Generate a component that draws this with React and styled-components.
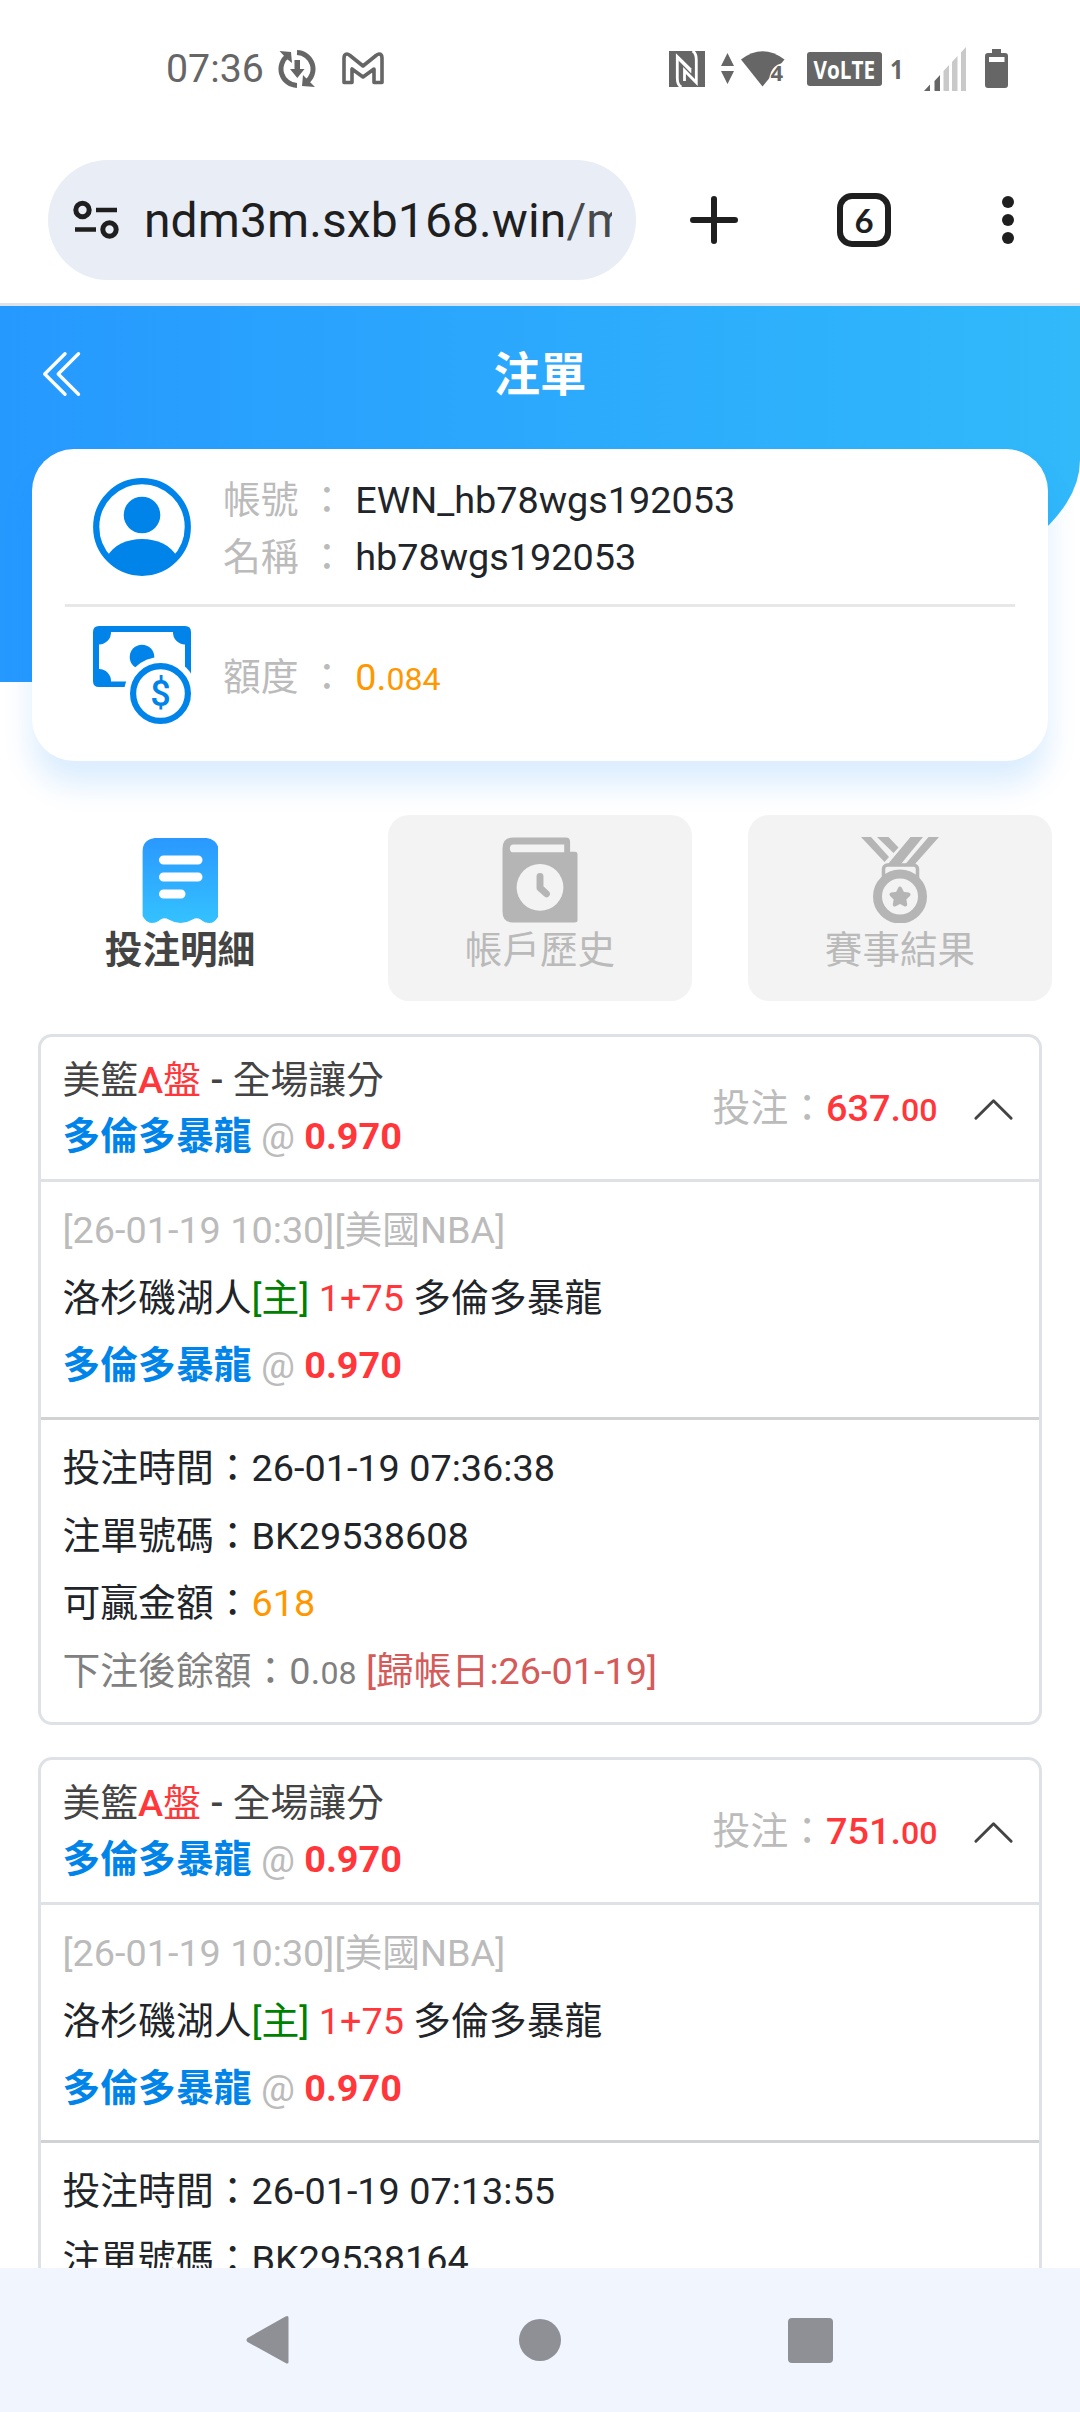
import styled, { createGlobalStyle } from "styled-components";
import { BsChevronDoubleLeft, BsChevronUp } from "react-icons/bs";

const GlobalStyle = createGlobalStyle`
* {
  box-sizing: border-box;
}
body {
  margin: 0;
  background: #fff;
  overflow: hidden;
}
svg {
  display: block;
  flex: none;
}
`;

const Screen = styled.div`
width: 1080px;
height: 2412px;
display: flex;
flex-direction: column;
overflow: hidden;
background: #fff;
color: #212529;
font-family: Roboto, "Noto Sans CJK TC", sans-serif;
font-size: 37.8px;
line-height: 1.5;
`;

/* status bar */

const StatusBar = styled.div`
flex: none;
height: 137px;
padding: 0 72px 0 166px;
display: flex;
justify-content: space-between;
align-items: center;
color: #666;
`;

const StatusGroup = styled.div`
display: flex;
align-items: center;
`;

const Clock = styled.span`
font-size: 39.3px;
line-height: 46px;
margin-right: 14px;
padding-top: 1px;
`;

const Slot = styled.span`
display: block;
margin-left: ${props => props.$left || 0}px;
`;

/* browser toolbar */

const Toolbar = styled.div`
flex: none;
height: 169px;
padding: 0 66px 0 48px;
display: flex;
align-items: center;
justify-content: space-between;
border-bottom: 3px solid #dde3ee;
`;

const Address = styled.div`
width: 588px;
height: 120px;
padding: 0 24px 0 25px;
display: flex;
align-items: center;
gap: 24px;
border-radius: 60px;
background: #e8edf6;
`;

const Url = styled.div`
flex: 1;
overflow: hidden;
padding-top: 2px;
white-space: nowrap;
font-size: 48px;
line-height: 60px;
letter-spacing: 0.1px;
color: #1f1f1f;
`;

const UrlPath = styled.span`
color: #474a4d;
`;

const Actions = styled.div`
display: flex;
align-items: center;
`;

const TabCount = styled.div`
width: 54px;
height: 54px;
margin: 0 111px 0 99px;
display: flex;
align-items: center;
justify-content: center;
border: 6px solid #1f1f1f;
border-radius: 15px;
color: #1f1f1f;
font-family: Lato, sans-serif;
font-weight: 700;
font-size: 33px;
line-height: 36px;
`;

/* page header */

const Hero = styled.header`
flex: none;
height: 376px;
padding: 0 38px;
background: linear-gradient(to right, #2699ff, #31b9fa);
border-bottom-right-radius: 710px 222px;
`;

const HeroRow = styled.div`
height: 136px;
display: grid;
grid-template-columns: 54px 1fr 54px;
align-items: center;
color: #fff;
`;

const Title = styled.h1`
margin: 0;
padding-top: 4px;
text-align: center;
font-size: 46.5px;
font-weight: 700;
`;

const Account = styled.section`
flex: none;
height: 312px;
margin: -233px 32px 0;
padding: 0 33px;
border-radius: 42px;
background: #fff;
box-shadow: 0 24px 30px rgba(0, 130, 250, 0.14);
`;

const AccountRow = styled.div`
height: ${props => props.$height}px;
padding-left: 28px;
display: flex;
align-items: center;
gap: 32px;
border-bottom: ${props => (props.$line ? "3px solid #e7e7e7" : "none")};
`;

const Fields = styled.div`
padding-top: ${props => props.$top}px;
`;

const Field = styled.div`
white-space: pre;
line-height: 57px;
`;

const Tone = styled.span`
color: ${props => props.$color};
font-weight: ${props => props.$weight || "inherit"};
`;

const Small = styled.span`
font-size: 0.85em;
`;

/* tabs */

const Tabs = styled.nav`
flex: none;
margin: 54px 28px 0;
display: grid;
grid-template-columns: repeat(3, 304px);
justify-content: space-between;
`;

const Tab = styled.div`
height: 186px;
padding-top: 22px;
display: flex;
flex-direction: column;
align-items: center;
border-radius: 21px;
background: ${props => (props.$active ? "#fff" : "#f3f3f3")};
color: ${props => (props.$active ? "#444" : "#bababa")};
font-size: 37.6px;
font-weight: ${props => (props.$active ? 700 : 400)};
line-height: 54px;
`;

/* tickets */

const Tickets = styled.main`
flex: 1;
min-height: 0;
overflow: hidden;
padding: 33px 38px 0;
`;

const Ticket = styled.article`
height: 690.5px;
margin-bottom: 32.5px;
border: 3px solid #dee2e6;
border-radius: 14px;
`;

const TicketHead = styled.div`
height: 145px;
padding: 0 22px 0 21.5px;
display: flex;
align-items: center;
border-bottom: 3px solid #dee2e6;
color: #444;
line-height: 56.3px;
`;

const Stake = styled.div`
margin-left: auto;
margin-right: 32.5px;
padding-top: 3px;
`;

const Toggle = styled.span`
padding-top: 3px;
`;

const TicketBody = styled.div`
padding: 15px 21.5px 17.5px;
line-height: 67.5px;
white-space: nowrap;
border-bottom: ${props => (props.$line ? "3px solid #d0d2d4" : "none")};
`;

/* system navigation */

const NavBar = styled.footer`
flex: none;
height: 144px;
padding: 0 135px;
display: grid;
grid-template-columns: repeat(3, 1fr);
align-items: center;
justify-items: center;
background: #f1f5fe;
`;

function SyncIcon() {
  return (
    <svg width="38" height="38" viewBox="0 0 38 38" fill="none" stroke="#666" strokeWidth="5">
      <path d="M19 2.5A16.5 16.5 0 0 1 28 32.5" />
      <path d="M19 35.5A16.5 16.5 0 0 1 10 5.5" />
      <path d="M1.500 1 13 2l1 11-5-4zM24 36l13 1-6-6-6-6z" fill="#666" stroke="none" />
      <path d="M16.500 10h5.500v9h4.500l-7.200 9-7.300-9h4.500z" fill="#666" stroke="none" />
    </svg>
  );
}

function MailIcon() {
  return (
    <svg width="42" height="33" viewBox="0 0 42 33" fill="none" stroke="#666" strokeWidth="3.6" strokeLinejoin="round">
      <path d="M2 30.500V6Q2 2 5 2 6 2 8 3.500L21 14 34 3.500Q36 2 37 2 40 2 40 6V30.500H32V17L21 25 10 17V30.500Z" />
    </svg>
  );
}

function NfcIcon() {
  return (
    <svg width="36" height="36" viewBox="0 0 36 36" fill="none" stroke="#fff" strokeWidth="2.8">
      <path d="M0 0H36V36H0z" fill="#666" stroke="none" />
      <path d="M12.500 36Q8.300 34.500 8.300 27V5.500L21.500 18.500" />
      <path d="M23.500 0Q27.300 2 27.300 9V31.500L15.500 19.500V30" />
      <path d="M9 8 21.500 20.500V17" strokeWidth="1.600" />
    </svg>
  );
}

function TrafficIcon() {
  return (
    <svg width="13" height="31" viewBox="0 0 13 31" fill="#666">
      <path d="M6.500 0 13 13H0zM0 18h13L6.500 31z" />
    </svg>
  );
}

function WifiIcon() {
  return (
    <svg width="44" height="36" viewBox="0 0 44 36">
      <path d="M0 8.500Q21.500-8 43.500 8.500L21.500 35.500z" fill="#666" />
      <path d="M28 34Q27 14 44 11.500V36z" fill="#fff" />
      <text x="29.500" y="30" fontFamily="Open Sans" fontWeight="700" fontSize="22" fill="#666">4</text>
    </svg>
  );
}

function VolteIcon() {
  return (
    <svg width="98" height="34" viewBox="0 0 98 34">
      <rect width="75" height="34" rx="3" fill="#666" />
      <text x="6.500" y="26.500" textLength="61.500" lengthAdjust="spacingAndGlyphs" fontFamily="Open Sans" fontWeight="700" fontSize="25.500" fill="#fff">VoLTE</text>
      <text x="83" y="27" textLength="13.5" lengthAdjust="spacingAndGlyphs" fontFamily="Open Sans" fontWeight="700" fontSize="26.500" fill="#666">1</text>
    </svg>
  );
}

function SignalIcon() {
  return (
    <svg width="42" height="44" viewBox="0 0 42 44">
      <path d="M0 44 6 37.500V44zM10.500 34 16 28V44H10.500z" fill="#666" />
      <path d="M19.500 24 25 18V44H19.500zM28 15 33.500 9V44H28zM37 5.500 42 0V44H37z" fill="#c9c9c9" />
    </svg>
  );
}

function BatteryIcon() {
  return (
    <svg width="23" height="39" viewBox="0 0 23 39">
      <path d="M7 0h9v4h4q3 0 3 3v29q0 3-3 3H3q-3 0-3-3V7q0-3 3-3h4z" fill="#666" />
      <path d="M4 8h15.500v5H4z" fill="#fff" />
    </svg>
  );
}

function SiteIcon() {
  return (
    <svg width="47" height="40" viewBox="0 0 47 40" fill="none" stroke="#1f1f1f" strokeWidth="5">
      <circle cx="9.500" cy="10" r="6.700" />
      <path d="M23 10H44M2 29.500H23" strokeWidth="4.500" />
      <circle cx="36.500" cy="29.500" r="6.700" />
    </svg>
  );
}

function PlusIcon() {
  return (
    <svg width="48" height="48" viewBox="0 0 48 48" stroke="#1f1f1f" strokeWidth="6" strokeLinecap="round">
      <path d="M24 3V45M3 24H45" />
    </svg>
  );
}

function MoreIcon() {
  return (
    <svg width="12" height="48" viewBox="0 0 12 48" fill="#1f1f1f">
      <circle cx="6" cy="6" r="6" />
      <circle cx="6" cy="24" r="6" />
      <circle cx="6" cy="42" r="6" />
    </svg>
  );
}

function UserIcon() {
  return (
    <svg width="98" height="98" viewBox="0 0 98 98" fill="#0084e9">
      <circle cx="49" cy="49" r="45.800" fill="none" stroke="#0084e9" strokeWidth="6.200" />
      <circle cx="49" cy="37" r="18.300" />
      <path d="M14 79C20 67 34 61 49 61S78 67 84 79A46 46 0 0 1 14 79z" />
    </svg>
  );
}

function MoneyIcon() {
  return (
    <svg width="98" height="98" viewBox="0 0 98 98" fill="#0084e9">
      <path fillRule="evenodd" d="M6 0H92Q98 0 98 6V55Q98 61 92 61H6Q0 61 0 55V6Q0 0 6 0zM18 6A12 12 0 0 1 6 18.500V43A12 12 0 0 1 18 55.500H80A12 12 0 0 1 92 43V18.500A12 12 0 0 1 80 6z" />
      <circle cx="49" cy="31" r="12.300" />
      <circle cx="67.500" cy="67.500" r="36.500" fill="#fff" />
      <circle cx="67.500" cy="67.500" r="27.400" fill="none" stroke="#0084e9" strokeWidth="6.200" />
      <text x="67.500" y="79.500" textAnchor="middle" fontFamily="Roboto" fontWeight="500" fontSize="36">$</text>
    </svg>
  );
}

function ReceiptIcon() {
  return (
    <svg width="76" height="86" viewBox="0 0 76 86">
      <defs>
        <linearGradient id="receipt" x1="0" y1="0" x2="0" y2="1">
          <stop offset="0" stopColor="#2a98ff" />
          <stop offset="1" stopColor="#34c2ff" />
        </linearGradient>
      </defs>
      <path transform="translate(0.6 0)" d="M12 1H64Q76 3 76 14V79Q72 86 67 86 62 86 58 82.500 54 80 50 82.500 44 86 38 86T26 82.500Q22 80 18 82.500 14 86 9 86 4 86 0 79V14Q0 3 12 1z" fill="url(#receipt)" />
      <path d="M21.500 23H56M21.500 40H56M21.500 57H39" stroke="#fff" strokeWidth="9" strokeLinecap="round" />
    </svg>
  );
}

function HistoryIcon() {
  return (
    <svg width="76" height="86" viewBox="-0.5 0 77 86">
      <path d="M11 0H64Q68.500 0 68.500 4.500V14.500H73Q76 14.500 76 17V84Q76 86 73 86H10Q0 86 0 75V11Q0 0 11 0z" fill="#b5b5b5" />
      <path d="M11 7H62.500V15H11Q7.500 15 7.500 11T11 7z" fill="#f3f3f3" />
      <circle cx="38" cy="50.500" r="23.700" fill="#f3f3f3" />
      <path d="M38 39.500V51L44.500 57" fill="none" stroke="#b5b5b5" strokeWidth="7" strokeLinecap="round" strokeLinejoin="round" />
    </svg>
  );
}

function MedalIcon() {
  return (
    <svg width="78" height="86" viewBox="0 0 78 86" fill="#b5b5b5">
      <path d="M0 0H10L28 20 23.500 25zM16 0H27.500L37.500 10.500 32.500 16zM67.500 0H78L54 27H44.500zM49.500 0H62L40 27H27z" />
      <rect x="22.500" y="28" width="34" height="22" rx="4" fill="#f3f3f3" stroke="#b5b5b5" strokeWidth="3.500" />
      <circle cx="39" cy="59.500" r="22.500" fill="#f3f3f3" stroke="#b5b5b5" strokeWidth="9" />
      <path d="M39 51.500 41.500 56.700 47.500 57.500 43.200 61.700 44.200 67.500 39 64.800 33.800 67.500 34.800 61.700 30.500 57.500 36.500 56.700z" stroke="#b5b5b5" strokeWidth="4" strokeLinejoin="round" />
    </svg>
  );
}

function BackIcon() {
  return (
    <svg width="48" height="50" viewBox="2.500 0 48 50" fill="#8f9095">
      <path d="M44 1Q45 1 45 3V47Q45 49 43 48.500L4 27Q2 25 4 23L42 1.500z" />
    </svg>
  );
}

function HomeIcon() {
  return (
    <svg width="42" height="42" viewBox="0 0 42 42" fill="#8f9095">
      <circle cx="21" cy="21" r="21" />
    </svg>
  );
}

function RecentIcon() {
  return (
    <svg width="45" height="45" viewBox="0 0 45 45" fill="#8f9095">
      <rect width="45" height="45" rx="4" />
    </svg>
  );
}

function Pick() {
  return (
    <div>
      <Tone $color="#0084e9" $weight={700}>多倫多暴龍</Tone>
      <Tone $color="#bbb"> @ </Tone>
      <Tone $color="#ff373b" $weight={700}>0.970</Tone>
    </div>
  );
}

const tickets = [
  { id: "BK29538608", stake: "637", time: "26-01-19 07:36:38", win: "618" },
  { id: "BK29538164", stake: "751", time: "26-01-19 07:13:55", win: "728" },
];

function App() {
  return (
    <Screen>
      <GlobalStyle />

      <StatusBar>
        <StatusGroup>
          <Clock>07:36</Clock>
          <SyncIcon />
          <Slot $left={26}><MailIcon /></Slot>
        </StatusGroup>
        <StatusGroup>
          <NfcIcon />
          <Slot $left={16}><TrafficIcon /></Slot>
          <Slot $left={7}><WifiIcon /></Slot>
          <Slot $left={22}><VolteIcon /></Slot>
          <Slot $left={19}><SignalIcon /></Slot>
          <Slot $left={19}><BatteryIcon /></Slot>
        </StatusGroup>
      </StatusBar>

      <Toolbar>
        <Address>
          <SiteIcon />
          <Url>ndm3m.sxb168.win<UrlPath>/m</UrlPath></Url>
        </Address>
        <Actions>
          <PlusIcon />
          <TabCount>6</TabCount>
          <MoreIcon />
        </Actions>
      </Toolbar>

      <Hero>
        <HeroRow>
          <BsChevronDoubleLeft size={54} />
          <Title>注單</Title>
        </HeroRow>
      </Hero>

      <Account>
        <AccountRow $height={158} $line>
          <UserIcon />
          <Fields $top={5}>
            <Field><Tone $color="#bbb">帳號 ： </Tone>EWN_hb78wgs192053</Field>
            <Field><Tone $color="#bbb">名稱 ： </Tone>hb78wgs192053</Field>
          </Fields>
        </AccountRow>
        <AccountRow $height={136}>
          <MoneyIcon />
          <Fields $top={7}>
            <Field><Tone $color="#bbb">額度 ： </Tone><Tone $color="#ff9800">0.<Small>084</Small></Tone></Field>
          </Fields>
        </AccountRow>
      </Account>

      <Tabs>
        <Tab $active><ReceiptIcon />投注明細</Tab>
        <Tab><HistoryIcon />帳戶歷史</Tab>
        <Tab><MedalIcon />賽事結果</Tab>
      </Tabs>

      <Tickets>
        {tickets.map(ticket => (
          <Ticket key={ticket.id}>
            <TicketHead>
              <div>
                <div>
                  美籃<Tone $color="#ff373b" $weight={500}>A</Tone><Tone $color="#ff373b">盤</Tone>
                  <Tone $weight={500}> - </Tone>全場讓分
                </div>
                <Pick />
              </div>
              <Stake>
                <Tone $color="#bbb">投注：</Tone>
                <Tone $color="#ff373b" $weight={500}>{ticket.stake}.<Small>00</Small></Tone>
              </Stake>
              <Toggle><BsChevronUp size={47} /></Toggle>
            </TicketHead>
            <TicketBody $line>
              <Tone $color="#bbb">[26-01-19 10:30][美國NBA]</Tone>
              <div>洛杉磯湖人<Tone $color="#008000">[主]</Tone> <Tone $color="#ff373b">1+75</Tone> 多倫多暴龍</div>
              <Pick />
            </TicketBody>
            <TicketBody>
              <div>投注時間：{ticket.time}</div>
              <div>注單號碼：{ticket.id}</div>
              <div>可贏金額：<Tone $color="#ff9800">{ticket.win}</Tone></div>
              <div><Tone $color="#808080">下注後餘額：0.<Small>08</Small></Tone> <Tone $color="#d55a5a">[歸帳日:26-01-19]</Tone></div>
            </TicketBody>
          </Ticket>
        ))}
      </Tickets>

      <NavBar>
        <BackIcon />
        <HomeIcon />
        <RecentIcon />
      </NavBar>
    </Screen>
  );
}

export default App;
